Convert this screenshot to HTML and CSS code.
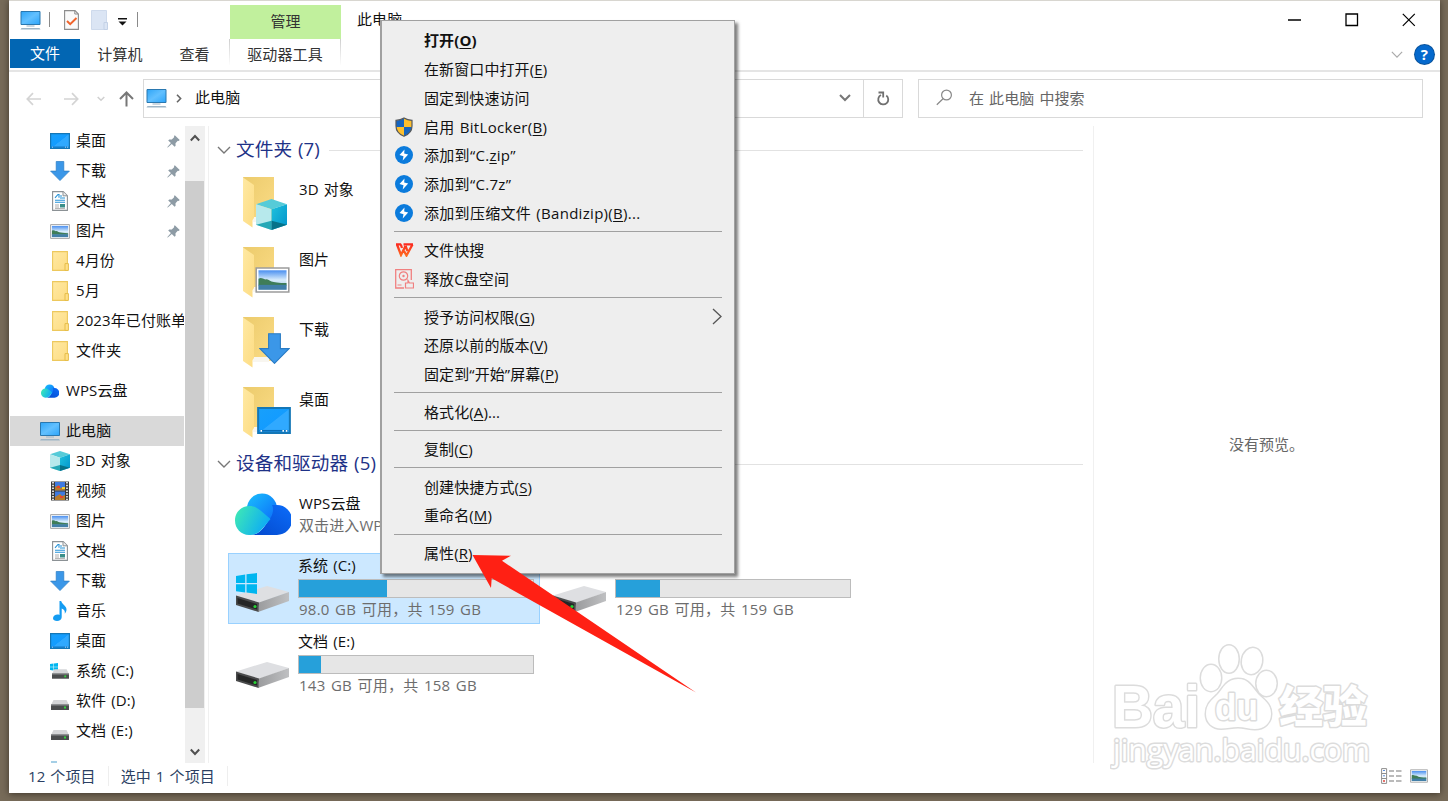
FILE: index.html
```html
<!DOCTYPE html>
<html lang="zh-CN">
	<head>
		<meta charset="utf-8" />
		<title>此电脑</title>
		<link rel="stylesheet" href="styles.css">
	</head>
	<body>
		<!-- shared icons -->
		<svg class="defs" width="0" height="0">
			<defs>
				<linearGradient id="screen" x1="0" y1="0" x2="1" y2="1"><stop offset="0" stop-color="#2ea5f7"/><stop offset=".5" stop-color="#62c0ff"/><stop offset="1" stop-color="#2ba4fa"/></linearGradient>
				<linearGradient id="desk" x1="0" y1="0" x2="1" y2="1"><stop offset="0" stop-color="#18a0fb"/><stop offset=".5" stop-color="#139cff"/><stop offset=".52" stop-color="#30a9ff"/><stop offset="1" stop-color="#30a9ff"/></linearGradient>
				<linearGradient id="sky" x1="0" y1="0" x2="0" y2="1"><stop offset="0" stop-color="#4a8ff0"/><stop offset=".5" stop-color="#d8ecfb"/><stop offset="1" stop-color="#9cc4de"/></linearGradient>
				<linearGradient id="fold" x1="0" y1="0" x2="1" y2="1"><stop offset="0" stop-color="#ffe9a3"/><stop offset="1" stop-color="#fddc83"/></linearGradient>
				<linearGradient id="foldback" x1="0" y1="0" x2="1" y2="1"><stop offset="0" stop-color="#eccb6c"/><stop offset="1" stop-color="#fbdc86"/></linearGradient>
				<linearGradient id="cloudA" x1="0" y1="0" x2="1" y2="1"><stop offset="0" stop-color="#1bc0fc"/><stop offset="1" stop-color="#0a68fa"/></linearGradient>
				<linearGradient id="cloudB" x1="0" y1=".3" x2="1" y2=".7"><stop offset="0" stop-color="#3ce6b8"/><stop offset="1" stop-color="#08a6fb"/></linearGradient>
				<linearGradient id="cloudC" x1="0" y1="1" x2="1" y2="0"><stop offset="0" stop-color="#0348cc"/><stop offset="1" stop-color="#0c6dfa"/></linearGradient>
				<linearGradient id="metal" x1="0" y1="0" x2="1" y2="0"><stop offset="0" stop-color="#9a9b9d"/><stop offset="1" stop-color="#bfc0c2"/></linearGradient>
				<linearGradient id="cubeR" x1="0" y1="0" x2="1" y2="1"><stop offset="0" stop-color="#1fc2dd"/><stop offset="1" stop-color="#0293cb"/></linearGradient>
				<linearGradient id="wps" x1="0" y1="0" x2="0" y2="1"><stop offset="0" stop-color="#fb2a20"/><stop offset="1" stop-color="#ff6a1f"/></linearGradient>
			</defs>
			<symbol id="i-pc" viewBox="0 0 20 20">
				<path d="M.5 1.5h19v13H.5z" fill="url(#screen)" stroke="#2a78b0"/>
				<path d="M6 15.4h8v1.2H6z" fill="#a9bccb"/>
				<path d="M1 18h18l1 1.6H0z" fill="#9eb5c6"/>
			</symbol>
			<symbol id="i-desktop" viewBox="0 0 20 16">
				<path d="M.6.6h18.8v14.8H.6z" fill="url(#desk)" stroke="#1477b7" stroke-width="1.2"/>
				<path d="M1.5 13.6h17v1h-17z" fill="#0b6db6"/>
				<path d="M15 13.7h.9v.9H15zM17 13.7h.9v.9H17zM2 13.7h.9v.9H2z" fill="#fff"/>
			</symbol>
			<symbol id="i-down" viewBox="0 0 20 20">
				<path d="M6.2.5h7.6v9.6h5.6L10 19.6.6 10.1h5.6z" fill="#3b97e8" stroke="#2a7cc4" stroke-width=".7"/>
			</symbol>
			<symbol id="i-doc" viewBox="0 0 16 20">
				<path d="M.6.6h10.6l4.2 4.2v14.6H.6z" fill="#fff" stroke="#8b9195" stroke-width="1.1"/>
				<path d="M11 .8v4h4" fill="#eee" stroke="#8b9195"/>
				<path d="M3 6.8 6 3.5h1v3.300M8 5h2M8 7h5M3 9.3h10M3 11.3h10" fill="none" stroke="#2693d8" stroke-width="1.1"/>
				<path d="M3 14h4M3 16h4M3 17.6h10" stroke="#9a9a9a" stroke-width=".8"/>
				<path d="M8 13h5v3.5H8z" fill="#3a8f8a"/>
			</symbol>
			<symbol id="i-pic" viewBox="0 0 20 15">
				<path d="M.6.6h18.8v13.8H.6z" fill="#fff" stroke="#9c9c9c" stroke-width=".9"/>
				<path d="M1.900 1.900h16.200v11.200H1.900z" fill="url(#sky)"/>
				<path d="M1.900 6.800c1.500-1 2.500 0 4 .4 1.200-.6 2 .6 3.500 1.100s4 .8 8.700 1v1.400H1.900z" fill="#3f7d58"/>
				<path d="M1.900 10.300h16.200v2.800H1.900z" fill="#427fa8"/>
			</symbol>
			<symbol id="i-folder" viewBox="0 0 17 20">
				<path d="M.6.6h14.800v18.800H.6z" fill="url(#fold)" stroke="#edc85c" stroke-width="1.100"/>
				<path d="M13 12.600h3.400v6.800H13z" fill="#ffdf88" stroke="#e6bd49"/>
			</symbol>
			<symbol id="i-cube" viewBox="0 0 30 30">
				<path d="M15 0 30 5 15 10 0 5z" fill="#56cbd8"/>
				<path d="M0 5l15 5v20L0 25z" fill="#b7e9ec"/>
				<path d="M15 10l15-5v20l-15 5z" fill="url(#cubeR)"/>
				<path d="M0 25l15-4v9z" fill="#25a8b6"/>
				<path d="M15 21l15 4-15 5z" fill="#067289"/>
			</symbol>
			<symbol id="i-video" viewBox="0 0 18 20">
				<path d="M0 .5h18v19H0z" fill="#3a3a3a"/>
				<path d="M4 1h10v8.500H4zM4 10.500h10V19H4z" fill="#3f7ae0"/>
				<path d="M4 6l4-2 1 3 5-1v3.500H4zM4 16l5-3 2 2 3-1v5H4z" fill="#b77a2b"/>
				<path d="M6 5h3v2H6zM9 15h3v2H9z" fill="#e8442d"/><path d="M11 6h3v2h-3z" fill="#f3d02f"/>
				<path d="M2 1v18M16 1v18" stroke="#fff" stroke-width="1.600" stroke-dasharray="1.500 1.300"/>
			</symbol>
			<symbol id="i-music" viewBox="0 0 14 20">
				<path d="M6.500 0h1.700c.3 3.200 5.300 4.500 5.300 8.500 0 1.800-.7 3-1.700 4.300.5-3-1-4.700-3.100-5.300v8.700C8.700 18.500 6.500 20 4 20c-2.200 0-4-1-4-2.800 0-2 2.300-3.700 4.500-3.700.8 0 1.400.1 2 .4z" fill="#149cf2"/>
			</symbol>
			<symbol id="i-drive" viewBox="0 0 18 10">
				<path d="M2.500 0h13L18 5H0z" fill="#d5d6d8"/>
				<path d="M0 4.500h18V10H0z" fill="#4b4d4e"/>
				<path d="M0 4.500h18V5.500H0z" fill="#8c8e90"/>
				<path d="M13 6.500h2v2h-2z" fill="#32d23c"/>
			</symbol>
			<symbol id="i-win" viewBox="0 0 20 20">
				<path d="M0 2.800 8.800 1.500v8H0zM10 1.300 20 0v9.500H10zM0 10.600h8.800v8L0 17.400zM10 10.600h10V20l-10-1.400z" fill="#00b6f0"/>
			</symbol>
			<symbol id="i-cloud" viewBox="0 0 56 42">
				<circle cx="27" cy="15.500" r="15" fill="url(#cloudA)"/>
				<path d="M42 12a15 15 0 1 1 0 30H15c7 0 11-4 14-8l7-10c2-4 3-9 1-12z" fill="url(#cloudC)"/>
				<path d="M0 27.500C0 19 6.500 13 14.500 13c5 0 8 2 11 4.500L35.500 26 28 35c-4 5-8 7-14 7C6 42 0 35.500 0 27.500z" fill="url(#cloudB)"/>
			</symbol>
			<symbol id="i-bigdrive" viewBox="0 0 54 28">
				<path d="M0 10.500 31 1l22 6-30 11z" fill="#dedfe2"/>
				<path d="M23 17.500 53 7v9L22 27z" fill="url(#metal)"/>
				<path d="M0 10.500l23 7-.5 9.500L0 20z" fill="#4a4b4c"/>
				<path d="M1.500 13l19.500 6v5.500L1.500 18.500z" fill="#252626"/>
				<circle cx="19" cy="21.500" r="1.600" fill="#27d136"/>
			</symbol>
			<symbol id="i-bigfolder" viewBox="0 0 36 54">
				<path d="M1 1h31v44H11z" fill="url(#foldback)"/>
				<path d="M11 41h16v5H11z" fill="#f8f6f0"/>
				<path d="M1 1.500 12 9v33l-1.500 2v7.500L1 45z" fill="url(#fold)"/>
			</symbol>
			<symbol id="i-pin" viewBox="0 0 13 13">
				<path d="M7.800.3 12.700 5l-1 .9-.9-.1-2.300 2.400.1 2.500-1 1L4.800 8.900.8 12.600.2 12.300l3.700-4.200L1.200 5.400l1.100-1 2.500.2 2.300-2.400V1z" fill="#8d9ba5"/>
			</symbol>
			<symbol id="i-bandi" viewBox="0 0 18 18">
				<circle cx="9" cy="9" r="9" fill="#0b7bdc"/>
				<path d="M9.500 3.500 4.500 9l4 1.200-.8 4.300 5.500-6-4-1z" fill="#fff"/>
			</symbol>
			<symbol id="i-chev" viewBox="0 0 14 8"><path d="M1 1l6 6 6-6" fill="none" stroke="currentColor" stroke-width="1.400"/></symbol>
		</svg>

		<div class="window">
			<header class="titlebar">
				<div class="quick">
					<svg class="q-pc" width="21" height="20"><use href="#i-pc"/></svg>
					<i class="bar"></i>
					<svg class="q-check" width="15" height="20" viewBox="0 0 15 20"><path d="M.6.600H11L14.400 4v15.400H.6z" fill="#fafafa" stroke="#8c8c8c" stroke-width="1.100"/><path d="M10.800.8V4H14" fill="none" stroke="#8c8c8c"/><path d="M3 11l3.200 3.200L12.500 8" fill="none" stroke="#f0642c" stroke-width="2"/></svg>
					<svg class="q-new" width="17" height="20" viewBox="0 0 17 20"><path d="M.5.5h15v19H.5z" fill="#dbe5f4" stroke="#cedaec"/><path d="M13 12.500h3.500v7H13z" fill="#dbe5f4" stroke="#c3d1e6"/></svg>
					<svg class="q-more" width="9" height="8" viewBox="0 0 9 8"><path d="M0 0h9v1.500H0zM.5 3.500h8l-4 4z" fill="#111"/></svg>
					<i class="bar last"></i>
				</div>
				<div class="context-tab">管理</div>
				<div class="title">此电脑</div>
				<div class="controls">
					<svg width="14" height="14" viewBox="0 0 14 14"><path d="M0 7h13" stroke="#000" stroke-width="1.500"/></svg>
					<svg width="14" height="14" viewBox="0 0 14 14"><path d="M1 1h11.500v11.500H1z" fill="none" stroke="#000" stroke-width="1.300"/></svg>
					<svg width="14" height="14" viewBox="0 0 14 14"><path d="M.8.8l12 12M12.800.8l-12 12" stroke="#000" stroke-width="1.200"/></svg>
				</div>
			</header>

			<nav class="ribbon">
				<div class="tab file">文件</div>
				<div class="tab computer">计算机</div>
				<div class="tab view">查看</div>
				<div class="tab tools">驱动器工具</div>
				<div class="ribbon-end">
					<svg class="fold-ribbon" width="12" height="7"><use href="#i-chev"/></svg>
					<div class="help">?</div>
				</div>
			</nav>

			<div class="address-row">
				<div class="nav-arrows">
					<svg width="16" height="14" viewBox="0 0 16 14"><path d="M15 7H1.500M7 1.200 1.300 7 7 12.800" fill="none" stroke="#d4d4d4" stroke-width="1.700"/></svg>
					<svg width="16" height="14" viewBox="0 0 16 14"><path d="M1 7h13.500M9 1.200 14.700 7 9 12.800" fill="none" stroke="#d4d4d4" stroke-width="1.700"/></svg>
					<svg class="recent" width="8" height="6" viewBox="0 0 8 6"><path d="M.7 1 4 4.300 7.300 1" fill="none" stroke="#d0d0d0" stroke-width="1.500"/></svg>
					<svg width="15" height="16" viewBox="0 0 15 16"><path d="M7.500 15.500V2M1 8l6.500-6.500L14 8" fill="none" stroke="#777" stroke-width="2"/></svg>
				</div>
				<div class="address">
					<svg width="21" height="20"><use href="#i-pc"/></svg>
					<svg class="crumb" width="6" height="9" viewBox="0 0 6 9"><path d="M1 .8l3.600 3.700L1 8.200" fill="none" stroke="#666" stroke-width="1.600"/></svg>
					<span>此电脑</span>
					<svg class="drop" width="12" height="8" viewBox="0 0 12 8"><path d="M1 1l5 5 5-5" fill="none" stroke="#777" stroke-width="2"/></svg>
					<div class="refresh"><svg width="14" height="15" viewBox="0 0 14 15"><path d="M10.300 4.500A5 5 0 1 1 5 4" fill="none" stroke="#707070" stroke-width="1.800"/><path d="M2.500 1.500h4.700V6.500" fill="none" stroke="#707070" stroke-width="1.800"/></svg></div>
				</div>
				<div class="search">
					<svg width="17" height="17" viewBox="0 0 17 17"><circle cx="10.500" cy="6" r="4.900" fill="none" stroke="#888" stroke-width="1.200"/><path d="M7 9.700.8 15.800" stroke="#888" stroke-width="1.200"/></svg>
					<span>在 此电脑 中搜索</span>
				</div>
			</div>

			<div class="content">
				<aside class="tree">
					<div class="row sub"><div class="ic"><svg width="20" height="16"><use href="#i-desktop"/></svg></div><span>桌面</span><svg class="pin" width="13" height="13"><use href="#i-pin"/></svg></div>
					<div class="row sub"><div class="ic"><svg width="20" height="20"><use href="#i-down"/></svg></div><span>下载</span><svg class="pin" width="13" height="13"><use href="#i-pin"/></svg></div>
					<div class="row sub"><div class="ic"><svg width="16" height="20"><use href="#i-doc"/></svg></div><span>文档</span><svg class="pin" width="13" height="13"><use href="#i-pin"/></svg></div>
					<div class="row sub"><div class="ic"><svg width="20" height="15"><use href="#i-pic"/></svg></div><span>图片</span><svg class="pin" width="13" height="13"><use href="#i-pin"/></svg></div>
					<div class="row sub"><div class="ic"><svg width="17" height="20"><use href="#i-folder"/></svg></div><span>4月份</span></div>
					<div class="row sub"><div class="ic"><svg width="17" height="20"><use href="#i-folder"/></svg></div><span>5月</span></div>
					<div class="row sub"><div class="ic"><svg width="17" height="20"><use href="#i-folder"/></svg></div><span>2023年已付账单</span></div>
					<div class="row sub"><div class="ic"><svg width="17" height="20"><use href="#i-folder"/></svg></div><span>文件夹</span></div>
					<div class="row root"><div class="ic"><svg width="18" height="14"><use href="#i-cloud"/></svg></div><span>WPS云盘</span></div>
					<div class="row root selected"><div class="ic"><svg width="20" height="20"><use href="#i-pc"/></svg></div><span>此电脑</span></div>
					<div class="row sub"><div class="ic"><svg width="20" height="20"><use href="#i-cube"/></svg></div><span>3D 对象</span></div>
					<div class="row sub"><div class="ic"><svg width="18" height="20"><use href="#i-video"/></svg></div><span>视频</span></div>
					<div class="row sub"><div class="ic"><svg width="20" height="15"><use href="#i-pic"/></svg></div><span>图片</span></div>
					<div class="row sub"><div class="ic"><svg width="16" height="20"><use href="#i-doc"/></svg></div><span>文档</span></div>
					<div class="row sub"><div class="ic"><svg width="20" height="20"><use href="#i-down"/></svg></div><span>下载</span></div>
					<div class="row sub"><div class="ic"><svg width="14" height="20"><use href="#i-music"/></svg></div><span>音乐</span></div>
					<div class="row sub"><div class="ic"><svg width="20" height="16"><use href="#i-desktop"/></svg></div><span>桌面</span></div>
					<div class="row sub"><div class="ic"><svg width="20" height="16" viewBox="0 0 20 16"><use href="#i-win" x="0" y="0" width="8" height="8"/><use href="#i-drive" x="2" y="6" width="17" height="10"/></svg></div><span>系统 (C:)</span></div>
					<div class="row sub"><div class="ic low"><svg width="18" height="10"><use href="#i-drive"/></svg></div><span>软件 (D:)</span></div>
					<div class="row sub"><div class="ic low"><svg width="18" height="10"><use href="#i-drive"/></svg></div><span>文档 (E:)</span></div>
					<div class="peek"></div>
				</aside>
				<div class="scrollbar">
					<svg width="10" height="8" viewBox="0 0 10 8"><path d="M.8 6.500 5 2l4.200 4.500" fill="none" stroke="#505050" stroke-width="2"/></svg>
					<div class="thumb"></div>
					<svg width="10" height="8" viewBox="0 0 10 8"><path d="M.8 1.500 5 6l4.200-4.500" fill="none" stroke="#505050" stroke-width="2"/></svg>
				</div>

				<main class="files">
					<h2 class="group"><svg width="14" height="8"><use href="#i-chev"/></svg><span>文件夹 (7)</span></h2>
					<div class="folders">
						<div class="folder"><svg width="56" height="58" viewBox="0 0 56 58"><use href="#i-bigfolder" x="4" y="1" width="36" height="54"/><use href="#i-cube" x="18" y="24" width="31" height="31"/></svg><span>3D 对象</span></div>
						<div class="folder"><svg width="56" height="58" viewBox="0 0 56 58"><use href="#i-bigfolder" x="4" y="1" width="36" height="54"/><use href="#i-pic" x="17" y="22" width="35" height="26"/></svg><span>图片</span></div>
						<div class="folder"><svg width="56" height="58" viewBox="0 0 56 58"><use href="#i-bigfolder" x="4" y="1" width="36" height="54"/><use href="#i-down" x="21" y="18" width="31" height="31"/></svg><span>下载</span></div>
						<div class="folder"><svg width="56" height="58" viewBox="0 0 56 58"><use href="#i-bigfolder" x="4" y="1" width="36" height="54"/><use href="#i-desktop" x="18" y="22" width="36" height="27"/></svg><span>桌面</span></div>
					</div>
					<h2 class="group"><svg width="14" height="8"><use href="#i-chev"/></svg><span>设备和驱动器 (5)</span></h2>
					<div class="drives">
						<div class="drive cloud">
							<svg width="56" height="42"><use href="#i-cloud"/></svg>
							<div class="info"><div class="name">WPS云盘</div><div class="note">双击进入WPS云盘</div></div>
						</div>
						<div class="drive selected">
							<svg width="54" height="42" viewBox="0 0 54 42"><use href="#i-bigdrive" x="0" y="13" width="54" height="28"/><use href="#i-win" x="0" y="1" width="21" height="21"/></svg>
							<div class="info"><div class="name">系统 (C:)</div><div class="meter"><i style="width:37.5%"></i></div><div class="note">98.0 GB 可用，共 159 GB</div></div>
						</div>
						<div class="drive">
							<svg width="54" height="42" viewBox="0 0 54 42"><use href="#i-bigdrive" x="0" y="13" width="54" height="28"/></svg>
							<div class="info"><div class="name">软件 (D:)</div><div class="meter"><i style="width:19%"></i></div><div class="note">129 GB 可用，共 159 GB</div></div>
						</div>
						<div class="drive">
							<svg width="54" height="42" viewBox="0 0 54 42"><use href="#i-bigdrive" x="0" y="13" width="54" height="28"/></svg>
							<div class="info"><div class="name">文档 (E:)</div><div class="meter"><i style="width:9.5%"></i></div><div class="note">143 GB 可用，共 158 GB</div></div>
						</div>
					</div>
				</main>

				<section class="preview">没有预览。</section>
			</div>

			<footer class="status">
				<span>12 个项目</span>
				<span>选中 1 个项目</span>
				<div class="modes">
					<svg width="21" height="16" viewBox="0 0 21 16"><path d="M.6.6h5v14.800h-5zM.6 5.500h5M.6 10.500h5" fill="#fff" stroke="#8f8f8f"/><path d="M2 2.500h2M2 7.800h2" stroke="#5b8ed8"/><path d="M2 13h2" stroke="#e0433c" stroke-width="1.500"/><path d="M8 3h5M15 3h5.500M8 8h5M15 8h5.500M8 13h5M15 13h5.500" stroke="#777" stroke-width="1.200"/></svg>
					<svg width="18" height="14" viewBox="0 0 18 14"><use href="#i-pic" width="18" height="14"/></svg>
				</div>
			</footer>
		</div>

		<svg class="watermark" width="270" height="140" viewBox="0 0 270 140">
			<text class="wm-bai" x="2" y="87" textLength="88" lengthAdjust="spacingAndGlyphs">Bai</text>
			<ellipse cx="101" cy="38" rx="10" ry="13"/>
			<ellipse cx="119" cy="19" rx="9.500" ry="13.500"/>
			<ellipse cx="142" cy="21" rx="10" ry="13" transform="rotate(10 142 21)"/>
			<ellipse cx="156.500" cy="43.500" rx="10" ry="12.500"/>
			<path d="M128 39c-11 0-15 9-20 15-6 6-12 10-12 20 0 9 7 14.500 15 14.500 6 0 11-1.500 17-1.500s11 2 17 2c9 0 16-6 16-15 0-10-7-14-13-20-6-7-9-15-20-15z"/>
			<text class="wm-du" x="105" y="80" textLength="43" lengthAdjust="spacingAndGlyphs">du</text>
			<text class="wm-jy" x="169" y="83" textLength="88" lengthAdjust="spacingAndGlyphs">经验</text>
			<text class="wm-url" x="3" y="121" textLength="257" lengthAdjust="spacingAndGlyphs">jingyan.baidu.com</text>
		</svg>

		<div class="menu">
			<div class="item default"><div class="mi"></div>打开(<u>O</u>)</div>
			<div class="item"><div class="mi"></div>在新窗口中打开(<u>E</u>)</div>
			<div class="item"><div class="mi"></div>固定到快速访问</div>
			<div class="item latin"><div class="mi"><svg width="18" height="20" viewBox="0 0 18 20"><path d="M9 1c2.500 1.500 5 2.200 8 2.400V9c0 5-3.500 8.500-8 10.200C4.500 17.500 1 14 1 9V3.400C4 3.200 6.500 2.500 9 1z" fill="#1565c0"/><path d="M9 1c2.500 1.500 5 2.200 8 2.400V10H9zM1 10h8v9.200C4.500 17.500 1.200 14.500 1 10z" fill="#fcbf2e"/><path d="M9 1c2.500 1.500 5 2.200 8 2.400V9c0 5-3.500 8.500-8 10.200C4.500 17.500 1 14 1 9V3.400C4 3.200 6.500 2.500 9 1z" fill="none" stroke="#56595c" stroke-width="1.200"/></svg></div>启用 BitLocker(<u>B</u>)</div>
			<div class="item latin"><div class="mi"><svg width="18" height="18"><use href="#i-bandi"/></svg></div>添加到“C.<u>z</u>ip”</div>
			<div class="item latin"><div class="mi"><svg width="18" height="18"><use href="#i-bandi"/></svg></div>添加到“C.7z”</div>
			<div class="item latin"><div class="mi"><svg width="18" height="18"><use href="#i-bandi"/></svg></div>添加到压缩文件 (Bandizip)(<u>B</u>)...</div>
			<hr>
			<div class="item"><div class="mi"><svg width="19" height="14" viewBox="0 0 19 14"><path d="M1 1.300h5.200M8.500 1.300H18M2 1.500l4 10.500L10.500 3M5.800 1.500 7 5M9 8l2.500 4.500L17.500 1.500M10.500 3l2 5" fill="none" stroke="url(#wps)" stroke-width="2.300"/></svg></div>文件快搜</div>
			<div class="item"><div class="mi"><svg width="19" height="20" viewBox="0 0 19 20"><path d="M9 19H.7V.7h15.600V11" fill="none" stroke="#f08080" stroke-width="1.300"/><circle cx="8.500" cy="7" r="4.200" fill="none" stroke="#f08080" stroke-width="1.200"/><circle cx="8.500" cy="7" r="1.200" fill="#f08080"/><path d="M2.500 16h4M10.500 14h2.500v-2.500l1.500 2.500h4v5h-8z" fill="none" stroke="#f08080" stroke-width="1.200"/></svg></div>释放C盘空间</div>
			<hr>
			<div class="item"><div class="mi"></div>授予访问权限(<u>G</u>)<svg class="more" width="10" height="17" viewBox="0 0 10 17"><path d="M1 1l8 7.500L1 16" fill="none" stroke="#555" stroke-width="1.300"/></svg></div>
			<div class="item"><div class="mi"></div>还原以前的版本(<u>V</u>)</div>
			<div class="item"><div class="mi"></div>固定到“开始”屏幕(<u>P</u>)</div>
			<hr>
			<div class="item"><div class="mi"></div>格式化(<u>A</u>)...</div>
			<hr>
			<div class="item"><div class="mi"></div>复制(<u>C</u>)</div>
			<hr>
			<div class="item"><div class="mi"></div>创建快捷方式(<u>S</u>)</div>
			<div class="item"><div class="mi"></div>重命名(<u>M</u>)</div>
			<hr>
			<div class="item"><div class="mi"></div>属性(<u>R</u>)</div>
		</div>

		<svg class="pointer" width="226" height="143" viewBox="0 0 226 143">
			<path d="M2.500 5 41 5.700 32 10.700 226 142.500 21.700 28.300 21 38z" fill="#ff2014"/>
		</svg>
	</body>
</html>
```
FILE: styles.css
```css
* {
	box-sizing: border-box;
}

body {
	margin: 0;
	height: 801px;
	padding: 0 8px 8px 9px;
	overflow: hidden;
	position: relative;
	background: #776b59;
	color: #111;
	font-family: "Open Sans", "Noto Sans CJK SC", sans-serif;
	font-size: 15px;
	letter-spacing: .1px;
	word-spacing: 1px;
	line-height: 20px;
	white-space: nowrap;
}

svg {
	display: block;
	flex: none;
}

.defs {
	position: absolute;
}

.window {
	height: 793px;
	display: flex;
	flex-direction: column;
	background: #fff;
	border-top: 1px solid #d8d6d0;
	box-shadow: 0 1px 7px #3d352a;
}

/* title bar */

.titlebar {
	display: flex;
	height: 38px;
}

.quick {
	display: flex;
	align-items: center;
	width: 221px;
	padding-left: 11px;
}

.quick .bar {
	width: 1px;
	height: 15px;
	background: #8a8a8a;
	margin: 0 0 1px 8px;
}

.q-check {
	margin-left: 14px;
}

.q-new {
	margin-left: 12px;
}

.q-more {
	margin: 3px 2px 0 10px;
}

.context-tab {
	width: 111px;
	margin-top: 4px;
	background: #c1f09d;
	color: #333;
	text-align: center;
	line-height: 33px;
}

.title {
	padding-left: 16px;
	line-height: 36px;
}

.controls {
	display: flex;
	gap: 43px;
	align-items: center;
	margin-left: auto;
	padding: 0 24px 1px 0;
}

/* ribbon */

.ribbon {
	display: flex;
	height: 33px;
	border-bottom: 2px solid #e5e5e5;
	color: #333;
}

.tab {
	text-align: center;
	line-height: 30px;
}

.file {
	width: 70px;
	height: 29px;
	margin-left: 1px;
	background: #0266b3;
	color: #fff;
	line-height: 28px;
}

.computer {
	width: 80px;
}

.view {
	width: 69px;
}

.tools {
	width: 112px;
	height: 26px;
	border: solid;
	border-width: 0 1px;
	border-image: linear-gradient(#ccc, #fff) 1;
}

.ribbon-end {
	display: flex;
	align-items: center;
	gap: 12px;
	margin-left: auto;
	padding-right: 6px;
	color: #aaa;
}

.help {
	width: 19px;
	height: 19px;
	border-radius: 50%;
	background: #0569cd;
	box-shadow: 0 0 0 1px #0a539c;
	color: #fff;
	font-size: 15px;
	font-weight: bold;
	line-height: 19px;
	text-align: center;
}

/* address bar */

.address-row {
	display: flex;
	height: 54px;
	padding: 7px 17px 0 0;
}

.nav-arrows {
	display: flex;
	align-items: center;
	width: 134px;
	height: 39px;
	padding-left: 17px;
	gap: 15px;
}

.nav-arrows svg:first-child {
	margin-right: 6px;
}

.recent {
	margin: 0 -1px 0 3px;
}

.address,
.search {
	display: flex;
	align-items: center;
	height: 39px;
	border: 1px solid #d9d9d9;
}

.address {
	width: 760px;
	padding: 0 0 1px 2px;
}

.address span {
	margin-top: -2px;
}

.crumb {
	margin: 0 13px 0 9px;
}

.drop {
	margin-left: auto;
}

.refresh {
	display: flex;
	align-items: center;
	justify-content: center;
	width: 39px;
	height: 37px;
	margin: 1px 0 0 12px;
	border-left: 1px solid #d9d9d9;
}

.search {
	width: 505px;
	margin-left: 15px;
	padding: 0 0 2px 17px;
	gap: 16px;
	color: #666;
}

/* navigation tree */

.content {
	display: flex;
	flex: 1;
	min-height: 0;
}

.tree {
	width: 175px;
	padding-left: 1px;
	overflow: hidden;
}

.row {
	display: flex;
	align-items: center;
	width: 174px;
	height: 30px;
	padding-left: 40px;
	overflow: hidden;
}

.row span {
	margin: -2px 0 0 6px;
}

.root {
	margin-top: 10px;
	padding-left: 30px;
}

.selected {
	background: #d9d9d9;
}

.ic {
	display: flex;
	flex: none;
	justify-content: center;
	width: 20px;
}

.low {
	padding-top: 8px;
}

.pin {
	margin-left: auto;
	margin-right: 4px;
}

.peek {
	width: 6px;
	height: 2px;
	margin: 15px 0 0 41px;
	background: #a5cfe6;
}

.scrollbar {
	display: flex;
	flex-direction: column;
	align-items: center;
	width: 20px;
	margin-left: 1px;
	padding: 8px 0 7px;
	background: #f0f0f0;
}

.thumb {
	width: 19px;
	height: 527px;
	margin: 39px 0 auto;
	align-self: flex-start;
	background: #cdcdcd;
}

/* file list */

.files {
	width: 886px;
	margin-left: 3px;
	border: solid #f0f0f0;
	border-width: 0 1px;
}

.group {
	display: flex;
	align-items: center;
	height: 30px;
	margin: 9px 10px 0 8px;
	color: #1e3287;
	font-size: 18.6px;
	font-weight: normal;
}

.group svg {
	color: #777;
	margin-right: 5px;
}

.group span {
	margin-top: -2px;
}

.group::after {
	content: "";
	flex: 1;
	height: 1px;
	margin-left: 9px;
	background: #e2e2e2;
}

.folder {
	display: flex;
	height: 70px;
	padding: 10px 0 0 29px;
}

.folder span {
	margin: 4px 0 0 5px;
}

.folders + .group {
	margin-top: 4px;
}

.drives {
	display: grid;
	grid-template-columns: 312px 312px;
	gap: 5px;
	margin: 6px 0 0 19px;
}

.drive {
	display: flex;
	height: 71px;
	padding: 1px 5px 0 7px;
	border: 1px solid transparent;
}

.drive svg {
	margin-top: 17px;
}

.drive .info {
	flex: 1;
	min-width: 0;
	margin-left: 8px;
}

.cloud {
	grid-column: 1 / 3;
	width: 312px;
	height: 63px;
	padding: 7px 0 0 6px;
}

.cloud svg {
	margin-top: 0;
}

.cloud .note {
	margin-top: 2px;
}

.drive.selected {
	border-color: #99d1ff;
	background: #cce8ff;
}

.meter {
	height: 19px;
	margin: 4px 0 1px;
	border: 1px solid #bcbcbc;
	background: #e6e6e6;
}

.meter i {
	display: block;
	height: 17px;
	background: #26a0da;
}

.note {
	color: #6d6d6d;
}

.meter + .note {
	padding-left: 1px;
	letter-spacing: .25px;
	word-spacing: 1.3px;
}

.preview {
	flex: 1;
	padding: 308px 0 0 135px;
	color: #666;
	letter-spacing: 0;
}

/* status bar */

.status {
	display: flex;
	align-items: center;
	height: 30px;
	padding: 0 12px 4px 19px;
	color: #2b3f63;
}

.status span {
	margin-right: 12px;
	padding-right: 12px;
	border-right: 1px solid #eee;
}

.modes {
	display: flex;
	align-items: center;
	gap: 8px;
	margin-left: auto;
}

/* context menu */

.menu {
	position: absolute;
	left: 380px;
	top: 20px;
	width: 355px;
	height: 554px;
	padding: 5px 12px 0 12px;
	border: 1px solid #a0a0a0;
	border-left-width: 2px;
	background: #eee;
	box-shadow: 3px 3px 3px rgba(0, 0, 0, .5);
}

.item {
	display: flex;
	align-items: center;
	height: 28.75px;
}

.latin {
	letter-spacing: .3px;
}

.default {
	font-weight: bold;
}

.item u {
	text-underline-offset: 2px;
}

.mi {
	display: flex;
	justify-content: center;
	width: 20px;
	margin-right: 10px;
}

.more {
	margin-left: auto;
}

.menu hr {
	height: 1px;
	margin: 3.9px 0 3.85px;
	border: 0;
	background: #a0a0a0;
}

.pointer {
	position: absolute;
	left: 470px;
	top: 550px;
	overflow: visible;
}

/* watermark */

.watermark {
	position: absolute;
	left: 1110px;
	top: 640px;
	fill: #fff;
	stroke: #dcdcdc;
	stroke-width: 3px;
	stroke-linejoin: round;
	paint-order: stroke;
	letter-spacing: 0;
}

.wm-bai {
	font: bold 60px "Liberation Sans", sans-serif;
}

.wm-du {
	font: bold 36px "Liberation Sans", sans-serif;
}

.wm-jy {
	font: 900 44px "Noto Sans CJK SC", sans-serif;
}

.wm-url {
	font: 31px "Open Sans", sans-serif;
}
```
